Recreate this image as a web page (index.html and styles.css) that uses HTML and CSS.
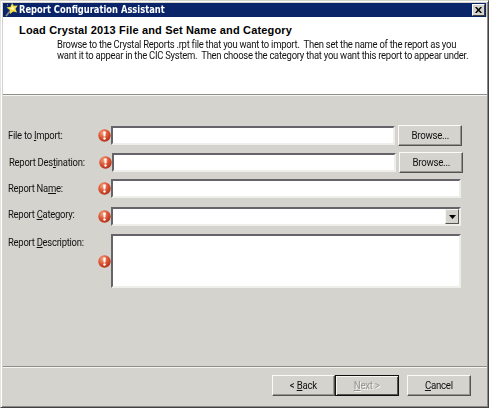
FILE: index.html
```html
<!DOCTYPE html>
<html lang="en">
<head>
<meta charset="utf-8">
<title>Report Configuration Assistant</title>
<link rel="stylesheet" href="styles.css">
</head>
<body>
<svg width="0" height="0" class="defs" aria-hidden="true">
  <defs>
    <radialGradient id="red" cx="38%" cy="30%" r="70%">
      <stop offset="0" stop-color="#f5a684"/>
      <stop offset=".5" stop-color="#e05a38"/>
      <stop offset="1" stop-color="#b5331c"/>
    </radialGradient>
    <symbol id="alert" viewBox="0 0 13 13">
      <circle cx="6.5" cy="6.5" r="6.2" fill="url(#red)"/>
      <path d="M5.2 2.4h2.6L7.4 7.6H5.6z" fill="#fff"/>
      <circle cx="6.5" cy="9.5" r="1.2" fill="#fff"/>
    </symbol>
  </defs>
</svg>
<div class="window">
  <header class="titlebar">
    <svg class="wand" viewBox="0 0 13 14">
      <path d="M1 13L6 7" stroke="#8d8d83" stroke-width="1.8"/>
      <path d="M7 0L8.8 2.7L12.8 2.4L10.5 5.7L12 9.6L8.2 8.4L5 11L5 7.2L1.4 4.6L5.6 3.8z" fill="#f5dc43"/>
      <path d="M7 2.7L8.2 4.6L10.4 4.6L8.8 6L8.4 7.8L6.8 6.4L4.6 5.3L6.6 4.7z" fill="#fffbb0"/>
      <path d="M2 1.5h1v1H2z" fill="#cfc46b"/>
    </svg>
    <span class="title">Report Configuration Assistant</span>
    <button class="close" aria-label="Close"><svg viewBox="0 0 8 7"><path d="M.7 0L7.3 7M7.3 0L.7 7" stroke="#000" stroke-width="1.7"/></svg></button>
  </header>
  <section class="banner">
    <h1>Load Crystal 2013 File and Set Name and Category</h1>
    <p>Browse to the Crystal Reports .rpt file that you want to import.&nbsp; Then set the name of the report as you<br>want it to appear in the CIC System.&nbsp; Then choose the category that you want this report to appear under.</p>
  </section>
  <main class="form">
    <div class="row file">
      <label>File to <u>I</u>mport:</label>
      <svg class="alert"><use href="#alert"/></svg>
      <div class="field short"></div>
      <button class="btn browse"><span>Browse...</span></button>
    </div>
    <div class="row destination">
      <label>Report Des<u>t</u>ination:</label>
      <svg class="alert"><use href="#alert"/></svg>
      <div class="field short"></div>
      <button class="btn browse"><span>Browse...</span></button>
    </div>
    <div class="row name">
      <label>Report Na<u>m</u>e:</label>
      <svg class="alert"><use href="#alert"/></svg>
      <div class="field"></div>
    </div>
    <div class="row category">
      <label>Report <u>C</u>ategory:</label>
      <svg class="alert"><use href="#alert"/></svg>
      <div class="field select"><div class="drop"><svg viewBox="0 0 7 4"><path d="M0 0h7L3.5 4z"/></svg></div></div>
    </div>
    <div class="row description">
      <label>Report <u>D</u>escription:</label>
      <svg class="alert"><use href="#alert"/></svg>
      <div class="field"></div>
    </div>
  </main>
  <footer class="actions">
    <button class="btn back"><span>&lt; <u>B</u>ack</span></button>
    <button class="btn next"><span><u>N</u>ext &gt;</span></button>
    <button class="btn cancel"><span><u>C</u>ancel</span></button>
  </footer>
</div>
</body>
</html>
```
FILE: styles.css
```css
* { box-sizing: border-box; }
body {
  margin: 0;
  background: #d5d3ce;
  font: 11px/11px Roboto, "Liberation Sans", Arial, sans-serif;
  color: #111;
}
.defs { position: absolute; }
.window {
  display: flex;
  flex-direction: column;
  width: 489px;
  height: 408px;
  padding: 2px 1px 1px 2px;
  border: 1px solid #d5d3ce;
  border-right: 1px solid #424242;
  border-bottom: 1px solid #424242;
  border-left-color: #e4e3df;
  box-shadow: inset 1px 1px #fff, inset -1px -1px #8c8a88;
  overflow: hidden;
}
.titlebar {
  display: flex;
  align-items: center;
  height: 14px;
  padding: 0 1px 0 2px;
  margin-right: 1px;
  background: #0a246a;
  flex: none;
}
.wand { width: 13px; height: 14px; margin-right: 1px; }
.title {
  flex: 1;
  color: #fff;
  font: bold 10px/12px "DejaVu Sans", sans-serif;
  white-space: nowrap;
  transform: scaleX(.835);
  transform-origin: left;
}
.close {
  display: flex;
  align-items: center;
  justify-content: center;
  width: 13px;
  height: 12px;
  padding: 0;
  border: 1px solid;
  border-color: #fff #404040 #404040 #fff;
  background: #d5d3ce;
}
.close svg { width: 7px; height: 6px; }
.banner {
  flex: none;
  height: 77px;
  padding: 8px 0 0 16px;
  background: #fff;
  white-space: nowrap;
}
.banner h1 {
  margin: 0 0 3px;
  font: bold 11px/11px "Liberation Sans", Arial, sans-serif;
  color: #000;
  letter-spacing: .16px;
}
.banner p {
  width: 420px;
  margin: 0 0 0 38px;
  letter-spacing: -.3px;
  transform-origin: left;
  transform: scaleX(.86);
}
.form {
  flex: none;
  height: 273px;
  padding: 30px 0 0 5px;
  border-top: 1px solid #8f8e8b;
  border-bottom: 1px solid #8f8e8b;
  box-shadow: inset 0 1px #f5f5f2;
}
.row { display: flex; align-items: center; }
.row label {
  flex: none;
  width: 90px;
  white-space: nowrap;
  letter-spacing: -.3px;
  transform-origin: left;
  transform: scaleX(.86);
}
.alert { width: 13px; height: 13px; flex: none; }
.field {
  width: 350px;
  height: 19px;
  border: 2px solid;
  border-color: #66646a #eeeeea #eeeeea #66646a;
  background: #fff;
}
.field.short { width: 284px; }
.btn {
  flex: none;
  width: 64px;
  height: 21px;
  padding: 0;
  border: 1px solid;
  border-color: #fafaf7 #55534f #55534f #fafaf7;
  box-shadow: inset -1px -1px #96948f;
  background: #d5d3ce;
  color: #111;
  font: inherit;
}
.btn span { display: inline-block; letter-spacing: -.3px; transform: scaleX(.88); }
.browse { margin-left: 3px; }
.file { height: 21px; }
.destination { height: 21px; margin: 6px 0 0 1px; }
.name { height: 19px; margin-top: 6px; }
.category { height: 19px; margin-top: 9px; }
.category label { margin-top: -5px; }
.select { display: flex; justify-content: flex-end; padding: 0; }
.drop {
  display: flex;
  align-items: center;
  justify-content: center;
  width: 14px;
  height: 15px;
  border: 1px solid;
  border-color: #f5f5f2 #55534f #55534f #f5f5f2;
  background: #d5d3ce;
}
.drop svg { width: 7px; height: 4px; }
.description { height: 54px; margin-top: 8px; }
.description label { align-self: flex-start; margin-top: 3px; }
.description .field { height: 54px; }
.actions {
  display: flex;
  align-items: flex-start;
  flex: 1;
  padding: 8px 0 0 269px;
  box-shadow: inset 0 1px #f5f5f2;
}
.back { width: 63px; }
.next {
  border: 1px solid #111;
  box-shadow: inset 1px 1px #f5f5f2, inset -1px -1px #55534f;
  color: #969490;
  text-shadow: 1px 1px #f5f5f2;
}
.cancel { margin-left: 8px; }
u { text-decoration-thickness: 1px; text-underline-offset: 1px; }
```
